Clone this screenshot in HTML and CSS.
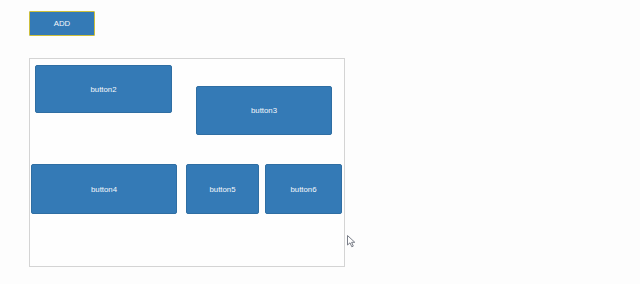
FILE: index.html
```html
<!DOCTYPE html>
<html lang="en">
<head>
    <meta charset="UTF-8">
    <meta name="viewport" content="width=device-width, initial-scale=1.0">
    <title>Drag board</title>
    <link rel="stylesheet" href="styles.css">
</head>
<body>
    <div class="page">
        <button class="btn btn-add">ADD</button>

        <!-- free canvas: item places are the content -->
        <div class="board">
            <button class="btn item item-2">button2</button>
            <button class="btn item item-3">button3</button>
            <button class="btn item item-4">button4</button>
            <button class="btn item item-5">button5</button>
            <button class="btn item item-6">button6</button>
        </div>
    </div>

    <svg class="cursor" width="10" height="13" viewBox="0 0 10 13">
        <path d="M0.5 0.5 L0.5 10 L3 7.8 L4.8 11.8 L6.3 11.1 L4.6 7.3 L7.8 7.3 Z" fill="#fff" stroke="#7a7e88" stroke-width="1"/>
    </svg>
</body>
</html>
```

FILE: styles.css
```css
* {
    margin: 0;
    padding: 0;
    box-sizing: border-box;
}

body {
    font-family: 'Liberation Sans', Arial, sans-serif;
    background: #fdfdfd;
    width: 640px;
    height: 284px;
    position: relative;
    overflow: hidden;
}

.page {
    padding: 11px 0 0 29px;
}

.btn {
    display: flex;
    align-items: center;
    justify-content: center;
    background: #347ab6;
    color: #f4f8fc;
    font-family: 'Liberation Sans', Arial, sans-serif;
    font-size: 7.8px;
    border: 1px solid #2f6ea3;
    border-radius: 2px;
    cursor: pointer;
}

.btn-add {
    width: 66px;
    height: 25px;
    border-color: #cdbf3c;
    border-radius: 1px;
}

.board {
    position: relative;
    margin-top: 22px;
    width: 316px;
    height: 209px;
    border: 1px solid #d4d4d4;
    background: #fefefe;
}

.item {
    position: absolute;
}

.item-2 { left: 5px;   top: 6px;   width: 137px; height: 48px; }
.item-3 { left: 166px; top: 27px;  width: 136px; height: 49px; }
.item-4 { left: 1px;   top: 105px; width: 146px; height: 50px; }
.item-5 { left: 156px; top: 105px; width: 73px;  height: 50px; }
.item-6 { left: 235px; top: 105px; width: 77px;  height: 50px; }

.cursor {
    position: absolute;
    left: 347px;
    top: 235px;
}
```
